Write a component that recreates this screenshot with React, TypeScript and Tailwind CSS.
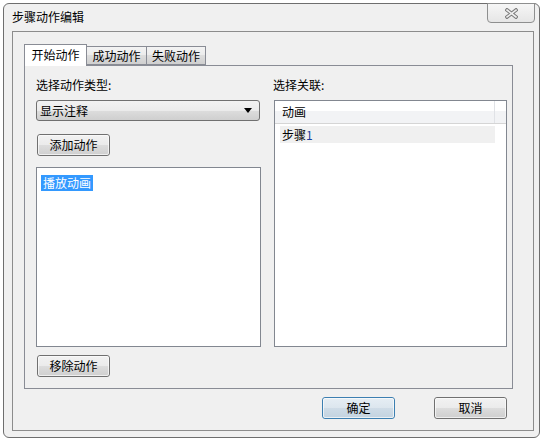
import React from "react";

const font = { fontFamily: '"Noto Sans CJK SC", "Liberation Sans", sans-serif' };

function Btn({ label, primary }: { label: string; primary?: boolean }) {
  return (
    <div
      className={
        "w-[73px] h-[22px] rounded-[3px] border flex items-center justify-center text-[12px] leading-none text-black " +
        (primary
          ? "border-[#3c7fb1] bg-[linear-gradient(#e6eef4_0%,#dce6ee_50%,#cfdce7_50%,#c3d3e0_100%)]"
          : "border-[#707070] bg-[linear-gradient(#f2f2f2_0%,#ebebeb_50%,#dddddd_50%,#cfcfcf_100%)]")
      }
    >
      <div className="w-full h-full rounded-[2px] border border-[#fcfcfc]/70 flex items-center justify-center">
        {label}
      </div>
    </div>
  );
}

export default function App() {
  return (
    <div className="w-[543px] h-[441px] bg-white pt-[3px] pl-[3px]" style={font}>
      <div className="relative w-[537px] h-[435px] rounded-[6px] border border-[#6e6e6e] bg-[#f0f0f0] flex flex-col">
        {/* close button */}
        <div className="absolute right-[4px] top-[-1px] w-[48px] h-[20px] rounded-b-[4px] border border-[#8e8f8f] bg-[linear-gradient(#f6f6f6,#e6e6e6)] flex items-center justify-center">
          <svg width="13" height="11" viewBox="0 0 13 11">
            <path d="M2 2 L11 9 M11 2 L2 9" stroke="#7a7a7a" strokeWidth="3.6" strokeLinecap="square" fill="none" />
            <path d="M2 2 L11 9 M11 2 L2 9" stroke="#eeeeee" strokeWidth="1.6" strokeLinecap="square" fill="none" />
          </svg>
        </div>
        {/* title */}
        <div className="h-[27px] pl-[8px] pt-[6px] text-[12px] leading-[14px] text-black">步骤动作编辑</div>
        {/* client */}
        <div className="ml-[8px] mr-[5px] mb-[6px] flex-1 border border-[#8c8c8c] bg-[#f0f0f0] flex flex-col pl-[11px] pt-[12px] pr-[20px]">
          {/* tabs */}
          <div className="flex items-end h-[21px] relative z-10">
            <div className="w-[63px] h-[22px] -mb-px border border-[#898c95] border-b-0 bg-white text-[12px] leading-none flex items-center justify-center pb-[2px]">
              开始动作
            </div>
            <div className="w-[60px] h-[19px] border border-l-0 border-[#898c95] bg-[linear-gradient(#f3f3f3_0%,#ebebeb_50%,#dddddd_50%,#cfcfcf_100%)] text-[12px] leading-none flex items-center justify-center">
              成功动作
            </div>
            <div className="w-[59px] h-[19px] border border-l-0 border-[#898c95] bg-[linear-gradient(#f3f3f3_0%,#ebebeb_50%,#dddddd_50%,#cfcfcf_100%)] text-[12px] leading-none flex items-center justify-center">
              失败动作
            </div>
          </div>
          {/* panel */}
          <div className="w-[489px] h-[324px] border border-[#898c95] bg-[#f0f0f0] flex pl-[11px] pt-[12px]">
            {/* left column */}
            <div className="w-[224px] flex flex-col">
              <div className="h-[14px] text-[12px] leading-[14px]">选择动作类型:</div>
              <div className="mt-[8px] w-[224px] h-[21px] rounded-[3px] border border-[#707070] bg-[linear-gradient(#f2f2f2_0%,#ebebeb_50%,#dddddd_50%,#cfcfcf_100%)] flex items-center justify-between pl-[3px] pr-[7px] text-[12px] leading-none">
                <span>显示注释</span>
                <svg width="8" height="5" viewBox="0 0 8 5">
                  <path d="M0 0 H8 L4 5 Z" fill="#000" />
                </svg>
              </div>
              <div className="mt-[13px] ml-[1px]">
                <Btn label="添加动作" />
              </div>
              <div className="mt-[11px] w-[225px] h-[180px] border border-[#828790] bg-white pl-[4px] pt-[1px]">
                <span className="inline-block h-[16px] px-[2px] bg-[#3399ff] text-white text-[12px] leading-[16px]">播放动画</span>
              </div>
              <div className="mt-[8px] ml-[1px]">
                <Btn label="移除动作" />
              </div>
            </div>
            {/* right column */}
            <div className="ml-[14px] w-[233px] flex flex-col">
              <div className="-ml-px h-[14px] text-[12px] leading-[14px]">选择关联:</div>
              <div className="mt-[8px] w-[233px] h-[247px] border border-[#828790] bg-white flex flex-col">
                <div className="h-[23px] flex border-b border-[#d5d5d5] bg-[linear-gradient(#ffffff_0%,#ffffff_45%,#f2f3f5_45%,#f2f3f5_100%)]">
                  <div className="w-[220px] border-r border-[#e0e2e6] pl-[7px] flex items-center text-[12px] leading-none">动画</div>
                </div>
                <div className="mt-[2px] ml-[5px] w-[215px] h-[17px] bg-[#f0f0f0] pl-[2px] flex items-center text-[12px] leading-none">
                  步骤<span className="text-[#1a3c9a]">1</span>
                </div>
              </div>
            </div>
          </div>
          {/* bottom buttons */}
          <div className="flex justify-end gap-[39px] mt-[8px] pr-[6px]">
            <Btn label="确定" primary />
            <Btn label="取消" />
          </div>
        </div>
      </div>
    </div>
  );
}
